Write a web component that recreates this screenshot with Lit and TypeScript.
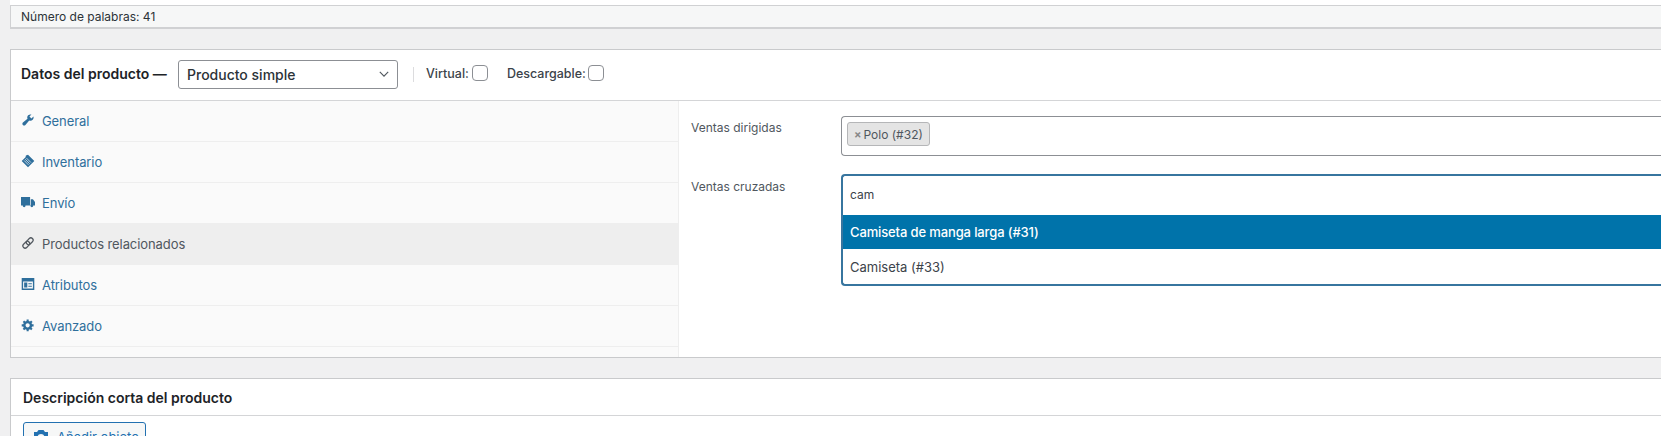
import { LitElement, html, css, svg } from "lit";
import { customElement } from "lit/decorators.js";

const ICONS: Record<string, unknown> = {
  wrench: svg`<path fill="currentColor" d="M16.68 9.77c-1.34 1.34-3.3 1.67-4.95.99l-5.41 6.52c-.99.99-2.59.99-3.58 0s-.99-2.59 0-3.58l6.52-5.41c-.68-1.65-.35-3.61.99-4.95 1.28-1.28 3.12-1.62 4.72-1.06l-2.89 2.89 2.82 2.82 2.86-2.87c.53 1.58.18 3.39-1.08 4.64z"/>`,
  tag: svg`<path fill="currentColor" d="M10 1 19 10 10 19 1 10 6.500 4.500 7 2l3-1Z"/><path d="M6 7.500l6.500 6.500M7.800 5.800l6.500 6.500M4.500 9.300l6.200 6.200" stroke="#fafafa" stroke-width="1" fill="none"/>`,
  truck: svg`<path fill="currentColor" d="M0 3h13v12H0zM14 6h3l3 4v5h-6z"/><circle cx="4.500" cy="15.500" r="2" fill="currentColor"/><circle cx="15.500" cy="15.500" r="2" fill="currentColor"/>`,
  link: svg`<g fill="none" stroke="currentColor" stroke-width="1.7" transform="rotate(-45 10 10)"><rect x="1" y="6.800" width="11" height="6.400" rx="3.200"/><rect x="8" y="6.800" width="11" height="6.400" rx="3.200"/></g>`,
  attr: svg`<path fill="currentColor" fill-rule="evenodd" d="M1 1.500h18v17H1zM3 6.500v10h14v-10zM4.500 8h4.500v7h-4.500zM10.500 9h5v1.500h-5zM10.500 12.500h5v1.500h-5z"/>`,
  gear: svg`<path fill="currentColor" d="M18 12h-2.18c-.17.7-.44 1.35-.81 1.93l1.54 1.54-2.1 2.1-1.54-1.54c-.58.36-1.23.63-1.91.79V19H8v-2.18c-.68-.16-1.33-.43-1.91-.79l-1.54 1.54-2.12-2.12 1.54-1.54c-.36-.58-.63-1.23-.79-1.91H1V9.03h2.17c.16-.7.44-1.35.8-1.94L2.430 5.550l2.100-2.100 1.540 1.540c.58-.37 1.240-.64 1.930-.81V2h3v2.180c.68.16 1.330.43 1.910.79l1.540-1.540 2.120 2.120-1.540 1.540c.36.59.64 1.240.8 1.940H18V12zm-8.500 1.500c1.660 0 3-1.340 3-3s-1.340-3-3-3-3 1.340-3 3 1.340 3 3 3z"/>`,
};

const TABS = [
  { icon: "wrench", label: "General" },
  { icon: "tag", label: "Inventario" },
  { icon: "truck", label: "Envío" },
  { icon: "link", label: "Productos relacionados", active: true },
  { icon: "attr", label: "Atributos" },
  { icon: "gear", label: "Avanzado" },
];

@customElement("app-root")
export class AppRoot extends LitElement {
  static styles = css`
    :host {
      display: block;
      width: 1661px;
      height: 436px;
      overflow: hidden;
      background: #f0f0f1;
      font-family: Inter, "Liberation Sans", sans-serif;
      font-size: 13px;
      color: #3c434a;
    }
    .page { width: 1720px; padding-left: 10px; box-sizing: border-box; }
    .strip { height: 5px; background: #fff; }
    .count {
      height: 21px;
      border: 1px solid #d0d1d3;
      border-bottom-width: 2px;
      border-right: 0;
      background: #f6f7f7;
      padding-left: 10px;
      font-size: 12px;
      line-height: 21px;
      color: #2c3338;
    }
    .panel {
      margin-top: 20px;
      border: 1px solid #c9cacc;
      border-right: 0;
      background: #fff;
    }
    .head {
      height: 48px;
      padding: 0 0 2px 10px;
      border-bottom: 1px solid #d4d5d7;
      display: flex;
      align-items: center;
      box-sizing: content-box;
    }
    .title { font-size: 14px; font-weight: 600; color: #1d2327; width: 157px; flex: none; margin-top: -1px; }
    .select {
      width: 220px;
      height: 29px;
      box-sizing: border-box;
      border: 1px solid #8c8f94;
      border-radius: 3px;
      display: flex;
      align-items: center;
      justify-content: space-between;
      padding: 0 6px 0 8px;
      font-size: 14px;
      font-weight: 500;
      color: #2c3338;
    }
    .select svg { width: 14px; height: 14px; color: #50575e; }
    .sep { width: 1px; height: 15px; background: #dcdcde; margin: 0 12px 0 15px; }
    .check { display: flex; align-items: center; gap: 3px; font-size: 12.500px; font-weight: 500; margin-right: 19px; margin-top: -2px; }
    .check + .check { gap: 2px; }
    .check input {
      appearance: none;
      width: 16px;
      height: 16px;
      margin: 0;
      border: 1px solid #8c8f94;
      border-radius: 4px;
      background: #fff;
    }
    .body { display: flex; height: 256px; }
    .tabs {
      width: 667px;
      flex: none;
      background: #fafafa;
      border-right: 1px solid #eee;
      box-sizing: content-box;
    }
    .tab {
      height: 40px;
      border-bottom: 1px solid #eee;
      display: flex;
      align-items: center;
      gap: 7px;
      padding-left: 10px;
      color: #2f6f9c;
      letter-spacing: -0.08px;
    }
    .tab.active { background: #eee; color: #50575e; }
    .tab svg { width: 14px; height: 14px; flex: none; margin-top: -3px; }
    .form { flex: 1; padding: 15px 0 0 12px; }
    .row { display: flex; margin-bottom: 18px; }
    .label { width: 150px; flex: none; font-size: 12px; line-height: 20px; padding-top: 2px; color: #50575e; }
    .row.second .label { padding-top: 3px; }
    .field {
      flex: 1;
      height: 40px;
      box-sizing: border-box;
      border: 1px solid #8c8f94;
      border-radius: 4px 0 0 4px;
      border-right: 0;
      padding: 5px;
    }
    .chip {
      display: inline-flex;
      align-items: center;
      gap: 2px;
      height: 24px;
      box-sizing: border-box;
      border: 1px solid #b5b6b8;
      border-radius: 3px;
      background: #e4e4e4;
      padding: 0 6px;
      font-size: 12px;
      color: #50575e;
    }
    .chip .x { color: #888; font-weight: 700; font-size: 11px; }
    .combo {
      flex: 1;
      height: 112px;
      box-sizing: border-box;
      border: 2px solid #37759f;
      border-right: 0;
      border-radius: 4px 0 0 4px;
      overflow: hidden;
    }
    .typed { height: 39px; box-sizing: border-box; padding: 0 0 2px 7px; display: flex; align-items: center; font-size: 12px; }
    .opt { display: flex; align-items: center; padding-left: 7px; font-size: 13px; }
    .opt.hi { height: 34px; background: #0073aa; color: #fff; font-weight: 500; letter-spacing: -0.13px; margin-left: -2px; padding-left: 9px; }
    .opt.lo { height: 35px; }
    .panel.desc { height: 60px; }
    .head.small { height: 36px; padding: 0 0 0 12px; }
    .head.small .title { width: auto; margin-top: 0; }
    .pad { padding: 6px 12px; }
    .btn {
      display: inline-flex;
      align-items: center;
      gap: 5px;
      width: 123px;
      height: 30px;
      box-sizing: border-box;
      border: 1px solid #2271b1;
      border-radius: 3px;
      background: #f6f7f7;
      padding-left: 8px;
      color: #2271b1;
      font-size: 13px;
    }
    .btn svg { width: 20px; height: 20px; flex: none; }
  `;

  private icon(name: string) {
    return html`<svg viewBox="0 0 20 20">${ICONS[name]}</svg>`;
  }

  render() {
    return html`<div class="page">
      <div class="strip"></div>
      <div class="count">Número de palabras: 41</div>
      <section class="panel">
        <div class="head">
          <span class="title">Datos del producto —</span>
          <div class="select">
            <span>Producto simple</span>
            <svg viewBox="0 0 20 20"><path d="M4 7l6 6 6-6" fill="none" stroke="currentColor" stroke-width="1.6"/></svg>
          </div>
          <span class="sep"></span>
          <label class="check">Virtual: <input type="checkbox" /></label>
          <label class="check">Descargable: <input type="checkbox" /></label>
        </div>
        <div class="body">
          <nav class="tabs">
            ${TABS.map(
              (t) => html`<div class="tab ${t.active ? "active" : ""}">${this.icon(t.icon)}<span>${t.label}</span></div>`
            )}
          </nav>
          <div class="form">
            <div class="row">
              <div class="label">Ventas dirigidas</div>
              <div class="field"><span class="chip"><span class="x">×</span>Polo (#32)</span></div>
            </div>
            <div class="row second">
              <div class="label">Ventas cruzadas</div>
              <div class="combo">
                <div class="typed">cam</div>
                <div class="opt hi">Camiseta de manga larga (#31)</div>
                <div class="opt lo">Camiseta (#33)</div>
              </div>
            </div>
          </div>
        </div>
      </section>
      <section class="panel desc">
        <div class="head small"><span class="title">Descripción corta del producto</span></div>
        <div class="pad">
          <span class="btn">
            <svg viewBox="0 0 20 20"><path fill="currentColor" d="M2 5h3l1.500-2h5L13 5h3v11H2zm7 9a3.500 3.500 0 1 0 0-7 3.500 3.500 0 0 0 0 7z"/></svg>
            Añadir objeto
          </span>
        </div>
      </section>
    </div>`;
  }
}
